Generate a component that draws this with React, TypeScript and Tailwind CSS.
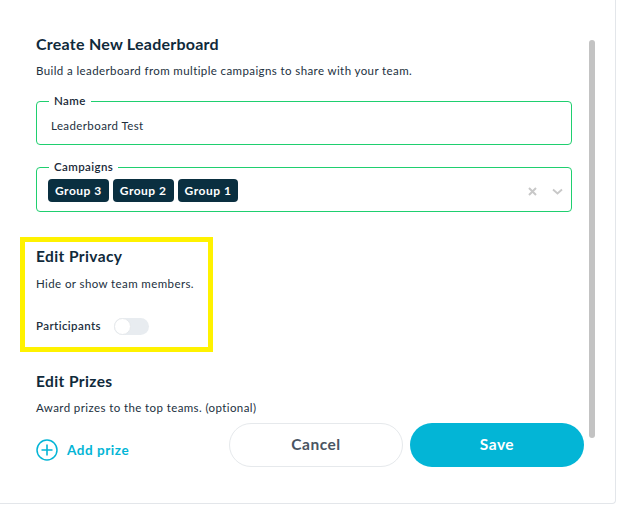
import React from "react";

const font = { fontFamily: "Lato, 'Open Sans', sans-serif" };

function Chip({ label }: { label: string }) {
  return (
    <span className="inline-flex h-[23px] items-center rounded-[4px] bg-[#0a2f40] px-[7px] text-[12px] font-bold tracking-[0.5px] text-white">
      {label}
    </span>
  );
}

function Field({ legend, children }: { legend: string; children: React.ReactNode }) {
  return (
    <fieldset className="w-[536px] rounded-[4px] border border-[#1fcf6f]">
      <legend className="ml-[12px] px-[5px] text-[11.5px] font-semibold leading-[14px] tracking-[0.4px] text-[#1a2a38]">
        {legend}
      </legend>
      {children}
    </fieldset>
  );
}

export default function App() {
  return (
    <div className="h-[505px] w-[618px] overflow-hidden bg-white" style={font}>
      <div className="flex h-[504px] w-[616px] rounded-br-[4px] border-r border-b border-[#e3e6ea] bg-white">
        <div className="flex w-[589px] flex-col pl-[36px] pt-[34px]">
          <h1 className="text-[16px] font-bold leading-[20px] tracking-[0.25px] text-[#102a3b]">
            Create New Leaderboard
          </h1>
          <p className="mt-[9px] text-[11.5px] leading-[16px] tracking-[0.4px] text-[#22303e]">
            Build a leaderboard from multiple campaigns to share with your team.
          </p>

          <div className="mt-[15px]">
            <Field legend="Name">
              <div className="flex h-[36px] items-center pl-[14px] text-[11.5px] tracking-[0.4px] text-[#22303e]">
                Leaderboard Test
              </div>
            </Field>
          </div>

          <div className="mt-[15px]">
            <Field legend="Campaigns">
              <div className="flex items-center pb-[9px] pl-[11px] pr-[8px] pt-[5px]">
                <div className="flex gap-[4px]">
                  <Chip label="Group 3" />
                  <Chip label="Group 2" />
                  <Chip label="Group 1" />
                </div>
                <div className="ml-auto flex items-center gap-[15px] pt-[2px]">
                  <svg width="9" height="9" viewBox="0 0 9 9">
                    <path d="M1 1L8 8M8 1L1 8" stroke="#c8c8c8" strokeWidth="2" />
                  </svg>
                  <svg width="11" height="7" viewBox="0 0 11 7">
                    <path d="M1 1.5L5.5 5.5L10 1.5" stroke="#c8c8c8" strokeWidth="1.8" fill="none" />
                  </svg>
                </div>
              </div>
            </Field>
          </div>

          <div className="ml-[-16px] mt-[25px] w-[193px] border-[5px] border-[#fff200] pb-[12px] pl-[11px] pt-[4px]">
            <h2 className="text-[15.5px] font-bold leading-[20px] tracking-[0.4px] text-[#102a3b]">Edit Privacy</h2>
            <p className="mt-[10px] text-[11.5px] leading-[16px] tracking-[0.4px] text-[#22303e]">
              Hide or show team members.
            </p>
            <div className="mt-[25px] flex h-[18px] items-center gap-[13px]">
              <span className="text-[11.5px] font-semibold tracking-[0.4px] text-[#22303e]">Participants</span>
              <span className="relative flex h-[17px] w-[35px] items-center rounded-full bg-[#e8ecf0]">
                <span className="h-[17px] w-[17px] rounded-full border border-[#e6e9ec] bg-white" />
              </span>
            </div>
          </div>

          <h2 className="mt-[19px] text-[15.5px] font-bold leading-[20px] tracking-[0.4px] text-[#102a3b]">
            Edit Prizes
          </h2>
          <p className="mt-[9px] text-[11.5px] leading-[16px] tracking-[0.4px] text-[#22303e]">
            Award prizes to the top teams. (optional)
          </p>

          <div className="mt-[7px] flex w-[548px] items-start">
            <div className="flex items-center gap-[9px] pt-[16px]">
              <svg width="22" height="22" viewBox="0 0 22 22">
                <circle cx="11" cy="11" r="10" stroke="#03b5d6" strokeWidth="1.5" fill="none" />
                <path d="M11 5.5V16.5M5.5 11H16.5" stroke="#03b5d6" strokeWidth="1.6" />
              </svg>
              <span className="text-[13.5px] font-bold tracking-[0.55px] text-[#03b5d6]">Add prize</span>
            </div>
            <div className="ml-auto flex gap-[7px]">
              <button className="h-[44px] w-[174px] rounded-full border border-[#e6e9ec] bg-white text-[15.5px] font-bold tracking-[0.5px] text-[#4a5562]">
                Cancel
              </button>
              <button className="h-[44px] w-[174px] rounded-full bg-[#03b5d6] text-[15.5px] font-bold tracking-[0.5px] text-white">
                Save
              </button>
            </div>
          </div>
        </div>
        <div className="mt-[40px] h-[398px] w-[6px] rounded-full bg-[#c3c3c3]" />
      </div>
    </div>
  );
}
